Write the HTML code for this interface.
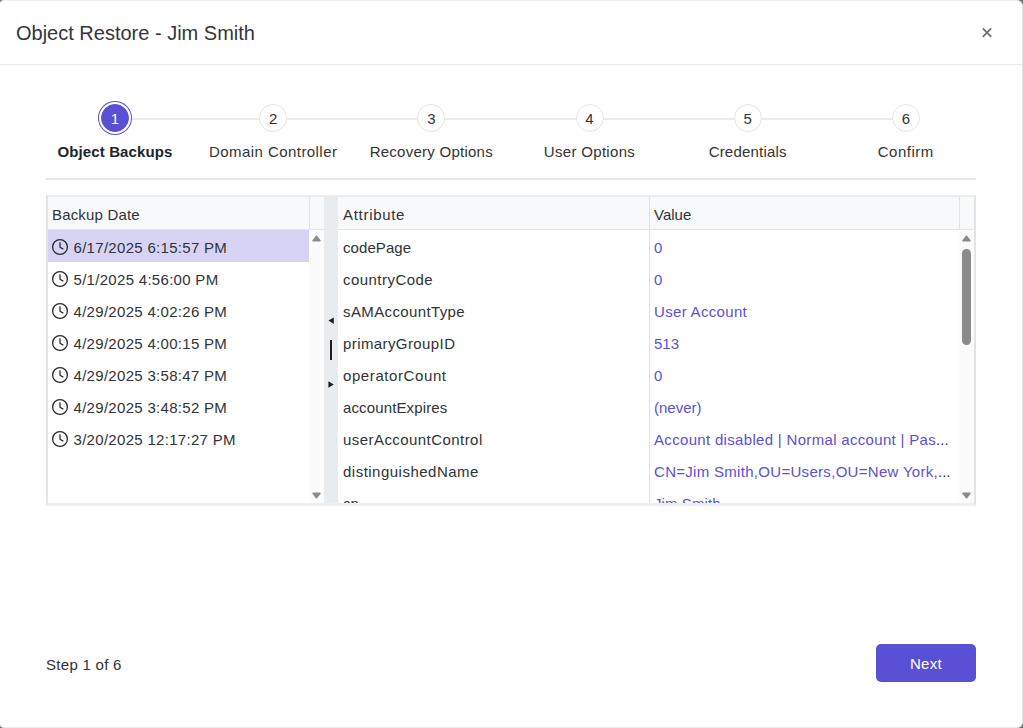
<!DOCTYPE html>
<html lang="en">
<head>
<meta charset="utf-8">
<title>Object Restore - Jim Smith</title>
<style>
*{box-sizing:border-box;margin:0;padding:0}
html,body{width:1023px;height:728px;overflow:hidden}
body{background:#6f6f6f;font-family:"Liberation Sans",sans-serif;font-size:15px;color:#303337;position:relative}
.modal{position:absolute;left:-1px;top:0;width:1024px;height:728px;background:#fff;border:1px solid #e4e4e4;border-top-color:#eeeeee;border-bottom-color:#ececec;border-radius:5px 6px 6px 5px;overflow:hidden}
.inner{position:absolute;left:0;top:-1px;width:1023px;height:728px}
/* header */
.mhead{position:absolute;left:0;top:0;width:1023px;height:65px;border-bottom:1px solid #ebebeb}
.mtitle{position:absolute;left:16px;top:21px;font-size:20px;line-height:24px;color:#32363b;white-space:nowrap}
.mclose{position:absolute;left:980px;top:26px;width:14px;height:14px}
/* stepper */
.stepper{position:absolute;left:0;top:96px;width:1023px;height:70px}
.track{position:absolute;left:115px;top:21.5px;width:791px;height:2px;background:#e9ecee}
.step{position:absolute;top:0;width:158px;height:70px;text-align:center}
.ind{position:absolute;left:65px;top:8px;width:28px;height:28px;border-radius:50%;border:1px solid #e4e4e4;background:#fff;line-height:27px;font-size:15px;color:#333}
.step.cur .ind{background:#5a50d6;border-color:#5a50d6;color:#fff;box-shadow:0 0 0 2px #fff,0 0 0 3px #5a50d6}
.lbl{position:absolute;left:-20px;right:-20px;top:46px;line-height:20px;white-space:nowrap;color:#333}
.step.cur .lbl{font-weight:bold;color:#212529}
.hr{position:absolute;left:46px;top:178px;width:930px;height:2px;background:#e4e4e4}
/* splitter + grids */
.split{position:absolute;left:46px;top:195px;width:930px;height:311px;border:2px solid #e3e5e5;border-top-color:#ededed;border-bottom:3px solid #efefef;background:#fff;overflow:hidden}
.pane{position:absolute;top:0;height:306px;overflow:hidden}
.p1{left:0;width:276px}
.p2{left:290px;width:636px}
.ghead{position:absolute;left:0;top:0;right:0;height:33px;background:#f8f9fa;border-bottom:1px solid #e6e6e6}
.th{position:absolute;top:0;height:32px;line-height:36px;padding-left:4px;white-space:nowrap;border-right:1px solid #e2e2e2}
.gbody{position:absolute;left:0;top:33px;bottom:0}
.row{height:32px;line-height:36px;white-space:nowrap;position:relative}
.row.sel{background:#d6d3f5}
.td{position:absolute;top:0;height:32px;padding-left:4px;overflow:hidden;text-overflow:ellipsis;white-space:nowrap}
.clock{position:absolute;left:4px;top:9px;width:16px;height:16px;overflow:visible}
.date{position:absolute;left:25.5px;top:0;letter-spacing:.3px}
.val{color:#5b50d6}
.vsb{position:absolute;top:33px;bottom:0;width:15px;background:#fbfbfb}
.arr{position:absolute;left:3px;width:9px;height:7px}
.thumb{position:absolute;left:3px;top:18.5px;width:9px;height:96px;border-radius:4.5px;background:#8b8b8b}
.bar{position:absolute;left:276px;top:0;width:14px;height:306px;background:#e9ecef}
.stepinfo{position:absolute;left:46px;top:654.5px;line-height:20px;white-space:nowrap;letter-spacing:.29px}
.next{position:absolute;left:876px;top:643.5px;width:100px;height:38px;border:0;border-radius:5px;background:#5a50d6;color:#fff;text-align:center;line-height:39px;font:inherit;font-size:15px;letter-spacing:.3px;padding:1px 0 0 0}
</style>
</head>
<body>
<div class="modal"><div class="inner">

<div class="mhead">
  <div class="mtitle">Object Restore - Jim Smith</div>
  <svg class="mclose" viewBox="0 0 14 14"><path d="M2.8 2.4 L11.2 10.8 M11.2 2.4 L2.8 10.8" stroke="#6d6d6d" stroke-width="1.7" fill="none"/></svg>
</div>

<div class="stepper">
  <div class="track"></div>
  <div class="step cur" style="left:36px"><div class="ind">1</div><div class="lbl" style="letter-spacing:.12px">Object Backups</div></div>
  <div class="step" style="left:194.2px"><div class="ind">2</div><div class="lbl" style="letter-spacing:.44px">Domain Controller</div></div>
  <div class="step" style="left:352.3px"><div class="ind">3</div><div class="lbl" style="letter-spacing:.25px">Recovery Options</div></div>
  <div class="step" style="left:510.5px"><div class="ind">4</div><div class="lbl" style="letter-spacing:.31px">User Options</div></div>
  <div class="step" style="left:668.7px"><div class="ind">5</div><div class="lbl" style="letter-spacing:.2px">Credentials</div></div>
  <div class="step" style="left:826.8px"><div class="ind">6</div><div class="lbl" style="letter-spacing:.5px">Confirm</div></div>
</div>
<div class="hr"></div>

<div class="split">
  <div class="pane p1">
    <div class="ghead">
      <div class="th" style="left:0;width:262px;letter-spacing:.17px">Backup Date</div>
    </div>
    <div class="gbody" style="width:261px">
      <div class="row sel"><svg class="clock" viewBox="0 0 16 16"><circle cx="8" cy="8" r="7.4" fill="none" stroke="#26292d" stroke-width="1.3"/><path d="M8 3.3V8.2L11.3 10.1" fill="none" stroke="#26292d" stroke-width="1.3"/></svg><span class="date">6/17/2025 6:15:57 PM</span></div>
      <div class="row"><svg class="clock" viewBox="0 0 16 16"><circle cx="8" cy="8" r="7.4" fill="none" stroke="#26292d" stroke-width="1.3"/><path d="M8 3.3V8.2L11.3 10.1" fill="none" stroke="#26292d" stroke-width="1.3"/></svg><span class="date">5/1/2025 4:56:00 PM</span></div>
      <div class="row"><svg class="clock" viewBox="0 0 16 16"><circle cx="8" cy="8" r="7.4" fill="none" stroke="#26292d" stroke-width="1.3"/><path d="M8 3.3V8.2L11.3 10.1" fill="none" stroke="#26292d" stroke-width="1.3"/></svg><span class="date">4/29/2025 4:02:26 PM</span></div>
      <div class="row"><svg class="clock" viewBox="0 0 16 16"><circle cx="8" cy="8" r="7.4" fill="none" stroke="#26292d" stroke-width="1.3"/><path d="M8 3.3V8.2L11.3 10.1" fill="none" stroke="#26292d" stroke-width="1.3"/></svg><span class="date">4/29/2025 4:00:15 PM</span></div>
      <div class="row"><svg class="clock" viewBox="0 0 16 16"><circle cx="8" cy="8" r="7.4" fill="none" stroke="#26292d" stroke-width="1.3"/><path d="M8 3.3V8.2L11.3 10.1" fill="none" stroke="#26292d" stroke-width="1.3"/></svg><span class="date">4/29/2025 3:58:47 PM</span></div>
      <div class="row"><svg class="clock" viewBox="0 0 16 16"><circle cx="8" cy="8" r="7.4" fill="none" stroke="#26292d" stroke-width="1.3"/><path d="M8 3.3V8.2L11.3 10.1" fill="none" stroke="#26292d" stroke-width="1.3"/></svg><span class="date">4/29/2025 3:48:52 PM</span></div>
      <div class="row"><svg class="clock" viewBox="0 0 16 16"><circle cx="8" cy="8" r="7.4" fill="none" stroke="#26292d" stroke-width="1.3"/><path d="M8 3.3V8.2L11.3 10.1" fill="none" stroke="#26292d" stroke-width="1.3"/></svg><span class="date">3/20/2025 12:17:27 PM</span></div>
    </div>
    <div class="vsb" style="left:261px">
      <svg class="arr" style="top:5px" viewBox="0 0 9 7"><path d="M4.5 1.3 L8 5.7 H1 Z" fill="#8b8b8b" stroke="#8b8b8b" stroke-width="1.5" stroke-linejoin="round"/></svg>
      <svg class="arr" style="top:262px" viewBox="0 0 9 7"><path d="M4.5 5.7 L8 1.3 H1 Z" fill="#8b8b8b" stroke="#8b8b8b" stroke-width="1.5" stroke-linejoin="round"/></svg>
    </div>
  </div>

  <div class="bar">
    <svg style="position:absolute;left:0;top:0" width="14" height="306" viewBox="0 0 14 306"><path d="M4.4 123.6 L9.8 120.4 V126.9 Z M4.4 184.3 V190.8 L9.8 187.5 Z" fill="#1d1d1d"/><rect x="6" y="143" width="2" height="20" fill="#1d1d1d"/></svg>
  </div>

  <div class="pane p2">
    <div class="ghead">
      <div class="th" style="left:0;width:312px;padding-left:5px;letter-spacing:0.7px">Attribute</div>
      <div class="th" style="left:312px;width:310px">Value</div>
    </div>
    <div class="gbody" style="width:622px">
      <div class="row"><div class="td" style="left:0;width:311px;padding-left:5px;letter-spacing:0.08px">codePage</div><div class="td" style="left:312px;width:304px"><span class="val">0</span></div></div>
      <div class="row"><div class="td" style="left:0;width:311px;padding-left:5px;letter-spacing:0.46px">countryCode</div><div class="td" style="left:312px;width:304px"><span class="val">0</span></div></div>
      <div class="row"><div class="td" style="left:0;width:311px;padding-left:5px;letter-spacing:0.38px">sAMAccountType</div><div class="td" style="left:312px;width:304px"><span class="val" style="letter-spacing:.32px">User Account</span></div></div>
      <div class="row"><div class="td" style="left:0;width:311px;padding-left:5px;letter-spacing:0.41px">primaryGroupID</div><div class="td" style="left:312px;width:304px"><span class="val">513</span></div></div>
      <div class="row"><div class="td" style="left:0;width:311px;padding-left:5px;letter-spacing:0.59px">operatorCount</div><div class="td" style="left:312px;width:304px"><span class="val">0</span></div></div>
      <div class="row"><div class="td" style="left:0;width:311px;padding-left:5px;letter-spacing:0.13px">accountExpires</div><div class="td" style="left:312px;width:304px"><span class="val">(never)</span></div></div>
      <div class="row"><div class="td" style="left:0;width:311px;padding-left:5px;letter-spacing:0.44px">userAccountControl</div><div class="td" style="left:312px;width:304px"><span class="val" style="letter-spacing:.32px">Account disabled | Normal account | Pas</span>...</div></div>
      <div class="row"><div class="td" style="left:0;width:311px;padding-left:5px;letter-spacing:0.49px">distinguishedName</div><div class="td" style="left:312px;width:304px"><span class="val" style="letter-spacing:.3px">CN=Jim Smith,OU=Users,OU=New York,</span>...</div></div>
      <div class="row"><div class="td" style="left:0;width:311px;padding-left:5px">cn</div><div class="td" style="left:312px;width:304px"><span class="val" style="letter-spacing:.08px">Jim Smith</span></div></div>
    </div>
    <div style="position:absolute;left:311px;top:33px;width:1px;bottom:0;background:#e2e2e2"></div>
    <div class="vsb" style="left:621px;width:15px">
      <svg class="arr" style="top:5px;left:3px" viewBox="0 0 9 7"><path d="M4.5 1.3 L8 5.7 H1 Z" fill="#8b8b8b" stroke="#8b8b8b" stroke-width="1.5" stroke-linejoin="round"/></svg>
      <div class="thumb"></div>
      <svg class="arr" style="top:262px;left:3px" viewBox="0 0 9 7"><path d="M4.5 5.7 L8 1.3 H1 Z" fill="#8b8b8b" stroke="#8b8b8b" stroke-width="1.5" stroke-linejoin="round"/></svg>
    </div>
  </div>
</div>

<div class="stepinfo">Step 1 of 6</div>
<button class="next" type="button">Next</button>

</div></div>
</body>
</html>
